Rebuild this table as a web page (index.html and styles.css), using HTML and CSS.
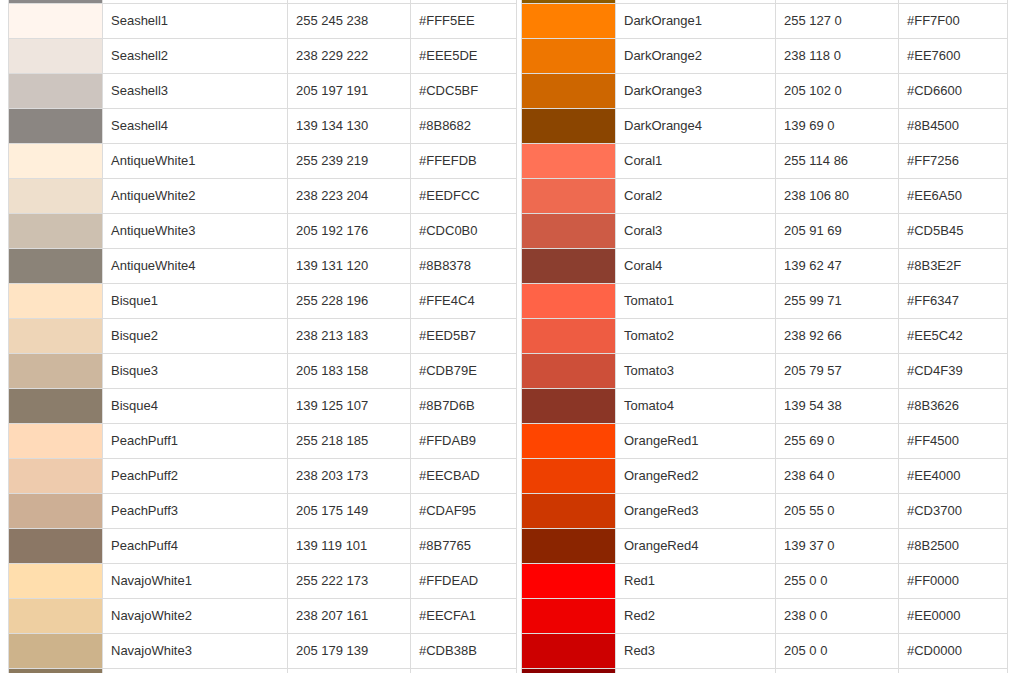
FILE: index.html
```html
<!DOCTYPE html>
<html>
<head>
<meta charset="utf-8">
<link rel="stylesheet" href="styles.css">
</head>
<body>
<div class="wrap">
<table class="colors left">
<colgroup><col class="c-sw"><col class="c-name-l"><col class="c-rgb"><col class="c-hex-l"></colgroup>
<tbody>
<tr><td class="sw" style="background:#8B8989"></td><td>Snow4</td><td>139 137 137</td><td>#8B8989</td></tr>
<tr><td class="sw" style="background:#FFF5EE"></td><td>Seashell1</td><td>255 245 238</td><td>#FFF5EE</td></tr>
<tr><td class="sw" style="background:#EEE5DE"></td><td>Seashell2</td><td>238 229 222</td><td>#EEE5DE</td></tr>
<tr><td class="sw" style="background:#CDC5BF"></td><td>Seashell3</td><td>205 197 191</td><td>#CDC5BF</td></tr>
<tr><td class="sw" style="background:#8B8682"></td><td>Seashell4</td><td>139 134 130</td><td>#8B8682</td></tr>
<tr><td class="sw" style="background:#FFEFDB"></td><td>AntiqueWhite1</td><td>255 239 219</td><td>#FFEFDB</td></tr>
<tr><td class="sw" style="background:#EEDFCC"></td><td>AntiqueWhite2</td><td>238 223 204</td><td>#EEDFCC</td></tr>
<tr><td class="sw" style="background:#CDC0B0"></td><td>AntiqueWhite3</td><td>205 192 176</td><td>#CDC0B0</td></tr>
<tr><td class="sw" style="background:#8B8378"></td><td>AntiqueWhite4</td><td>139 131 120</td><td>#8B8378</td></tr>
<tr><td class="sw" style="background:#FFE4C4"></td><td>Bisque1</td><td>255 228 196</td><td>#FFE4C4</td></tr>
<tr><td class="sw" style="background:#EED5B7"></td><td>Bisque2</td><td>238 213 183</td><td>#EED5B7</td></tr>
<tr><td class="sw" style="background:#CDB79E"></td><td>Bisque3</td><td>205 183 158</td><td>#CDB79E</td></tr>
<tr><td class="sw" style="background:#8B7D6B"></td><td>Bisque4</td><td>139 125 107</td><td>#8B7D6B</td></tr>
<tr><td class="sw" style="background:#FFDAB9"></td><td>PeachPuff1</td><td>255 218 185</td><td>#FFDAB9</td></tr>
<tr><td class="sw" style="background:#EECBAD"></td><td>PeachPuff2</td><td>238 203 173</td><td>#EECBAD</td></tr>
<tr><td class="sw" style="background:#CDAF95"></td><td>PeachPuff3</td><td>205 175 149</td><td>#CDAF95</td></tr>
<tr><td class="sw" style="background:#8B7765"></td><td>PeachPuff4</td><td>139 119 101</td><td>#8B7765</td></tr>
<tr><td class="sw" style="background:#FFDEAD"></td><td>NavajoWhite1</td><td>255 222 173</td><td>#FFDEAD</td></tr>
<tr><td class="sw" style="background:#EECFA1"></td><td>NavajoWhite2</td><td>238 207 161</td><td>#EECFA1</td></tr>
<tr><td class="sw" style="background:#CDB38B"></td><td>NavajoWhite3</td><td>205 179 139</td><td>#CDB38B</td></tr>
<tr><td class="sw" style="background:#8B795E"></td><td>NavajoWhite4</td><td>139 121 94</td><td>#8B795E</td></tr>
</tbody>
</table>
<table class="colors right">
<colgroup><col class="c-sw"><col class="c-name-r"><col class="c-rgb"><col class="c-hex-r"></colgroup>
<tbody>
<tr><td class="sw" style="background:#8B5A00"></td><td>Orange4</td><td>139 90 0</td><td>#8B5A00</td></tr>
<tr><td class="sw" style="background:#FF7F00"></td><td>DarkOrange1</td><td>255 127 0</td><td>#FF7F00</td></tr>
<tr><td class="sw" style="background:#EE7600"></td><td>DarkOrange2</td><td>238 118 0</td><td>#EE7600</td></tr>
<tr><td class="sw" style="background:#CD6600"></td><td>DarkOrange3</td><td>205 102 0</td><td>#CD6600</td></tr>
<tr><td class="sw" style="background:#8B4500"></td><td>DarkOrange4</td><td>139 69 0</td><td>#8B4500</td></tr>
<tr><td class="sw" style="background:#FF7256"></td><td>Coral1</td><td>255 114 86</td><td>#FF7256</td></tr>
<tr><td class="sw" style="background:#EE6A50"></td><td>Coral2</td><td>238 106 80</td><td>#EE6A50</td></tr>
<tr><td class="sw" style="background:#CD5B45"></td><td>Coral3</td><td>205 91 69</td><td>#CD5B45</td></tr>
<tr><td class="sw" style="background:#8B3E2F"></td><td>Coral4</td><td>139 62 47</td><td>#8B3E2F</td></tr>
<tr><td class="sw" style="background:#FF6347"></td><td>Tomato1</td><td>255 99 71</td><td>#FF6347</td></tr>
<tr><td class="sw" style="background:#EE5C42"></td><td>Tomato2</td><td>238 92 66</td><td>#EE5C42</td></tr>
<tr><td class="sw" style="background:#CD4F39"></td><td>Tomato3</td><td>205 79 57</td><td>#CD4F39</td></tr>
<tr><td class="sw" style="background:#8B3626"></td><td>Tomato4</td><td>139 54 38</td><td>#8B3626</td></tr>
<tr><td class="sw" style="background:#FF4500"></td><td>OrangeRed1</td><td>255 69 0</td><td>#FF4500</td></tr>
<tr><td class="sw" style="background:#EE4000"></td><td>OrangeRed2</td><td>238 64 0</td><td>#EE4000</td></tr>
<tr><td class="sw" style="background:#CD3700"></td><td>OrangeRed3</td><td>205 55 0</td><td>#CD3700</td></tr>
<tr><td class="sw" style="background:#8B2500"></td><td>OrangeRed4</td><td>139 37 0</td><td>#8B2500</td></tr>
<tr><td class="sw" style="background:#FF0000"></td><td>Red1</td><td>255 0 0</td><td>#FF0000</td></tr>
<tr><td class="sw" style="background:#EE0000"></td><td>Red2</td><td>238 0 0</td><td>#EE0000</td></tr>
<tr><td class="sw" style="background:#CD0000"></td><td>Red3</td><td>205 0 0</td><td>#CD0000</td></tr>
<tr><td class="sw" style="background:#8B0000"></td><td>Red4</td><td>139 0 0</td><td>#8B0000</td></tr>
</tbody>
</table>
</div>
</body>
</html>
```
FILE: styles.css
```css
html, body {
  margin: 0;
  padding: 0;
  background: #fff;
  overflow: hidden;
}
body {
  font-family: "Liberation Sans", Arial, Helvetica, sans-serif;
  font-size: 13px;
  color: #333;
}
.wrap {
  display: flex;
  align-items: flex-start;
  gap: 4px;
  padding-left: 8px;
  margin-top: -32px;
}
.colors {
  border-collapse: collapse;
  table-layout: fixed;
  flex: none;
}
.colors.left { width: 508px; }
.colors.right { width: 486px; }
.c-sw { width: 94px; }
.c-name-l { width: 185px; }
.c-name-r { width: 160px; }
.c-rgb { width: 123px; }
.c-hex-l { width: 106px; }
.c-hex-r { width: 109px; }
.colors td {
  border: 1px solid #dcdcdc;
  padding: 10px 8px;
  line-height: 14px;
  height: 14px;
  white-space: nowrap;
  vertical-align: middle;
}
.colors td.sw {
  padding: 0;
}
```
